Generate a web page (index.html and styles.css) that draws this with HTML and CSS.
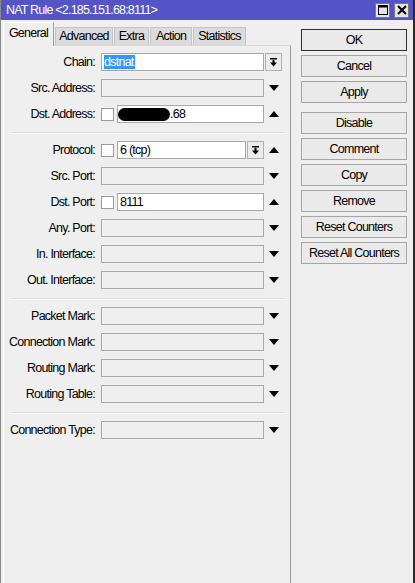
FILE: index.html
```html
<!DOCTYPE html>
<html lang="en">
<head>
<meta charset="UTF-8">
<meta name="viewport" content="width=device-width, initial-scale=1.0">
<title>NAT Rule</title>
<link rel="stylesheet" href="styles.css">
</head>
<body>

<div class="ventana">
  <div class="barra-titulo">
    <span class="titulo">NAT Rule &lt;2.185.151.68:8111&gt;</span>
    <div class="botones-titulo">
      <span class="btn-titulo">
        <svg width="10" height="10" viewBox="0 0 10 10"><rect x="0.5" y="0.5" width="9" height="9" fill="none" stroke="#000" stroke-width="1"/><line x1="0" y1="1.5" x2="10" y2="1.5" stroke="#000" stroke-width="2"/></svg>
      </span>
      <span class="btn-titulo">
        <svg width="10" height="10" viewBox="0 0 10 10"><path d="M1 1 L9 9 M9 1 L1 9" stroke="#000" stroke-width="2"/></svg>
      </span>
    </div>
  </div>

  <div class="contenido">
    <div class="columna">
      <div class="pestanas">
        <span class="pestana activa">General</span>
        <span class="pestana">Advanced</span>
        <span class="pestana">Extra</span>
        <span class="pestana">Action</span>
        <span class="pestana">Statistics</span>
      </div>

      <div class="panel">
        <div class="grupo">
          <div class="fila">
            <span class="etiqueta">Chain:</span>
            <div class="campo ancho">
              <span class="entrada blanca"><span class="seleccion">dstnat</span></span>
              <span class="desplegar"><svg width="9" height="9" viewBox="0 0 9 9"><rect x="1" y="0" width="7" height="1.5" fill="#000"/><rect x="3.5" y="2" width="2" height="3" fill="#000"/><polygon points="1,4.5 8,4.5 4.5,8.5" fill="#000"/></svg></span>
            </div>
          </div>
          <div class="fila">
            <span class="etiqueta">Src. Address:</span>
            <div class="campo"><span class="entrada"></span></div>
            <span class="flecha abajo"></span>
          </div>
          <div class="fila">
            <span class="etiqueta">Dst. Address:</span>
            <div class="campo">
              <span class="casilla"></span>
              <span class="entrada blanca"><span class="tachado"></span>.68</span>
            </div>
            <span class="flecha arriba"></span>
          </div>
        </div>
        <div class="separador"></div>

        <div class="grupo">
          <div class="fila">
            <span class="etiqueta">Protocol:</span>
            <div class="campo">
              <span class="casilla"></span>
              <span class="entrada blanca">6 (tcp)</span>
              <span class="desplegar"><svg width="9" height="9" viewBox="0 0 9 9"><rect x="1" y="0" width="7" height="1.5" fill="#000"/><rect x="3.5" y="2" width="2" height="3" fill="#000"/><polygon points="1,4.5 8,4.5 4.5,8.5" fill="#000"/></svg></span>
            </div>
            <span class="flecha arriba"></span>
          </div>
          <div class="fila">
            <span class="etiqueta">Src. Port:</span>
            <div class="campo"><span class="entrada"></span></div>
            <span class="flecha abajo"></span>
          </div>
          <div class="fila">
            <span class="etiqueta">Dst. Port:</span>
            <div class="campo">
              <span class="casilla"></span>
              <span class="entrada blanca">8111</span>
            </div>
            <span class="flecha arriba"></span>
          </div>
          <div class="fila">
            <span class="etiqueta">Any. Port:</span>
            <div class="campo"><span class="entrada"></span></div>
            <span class="flecha abajo"></span>
          </div>
          <div class="fila">
            <span class="etiqueta">In. Interface:</span>
            <div class="campo"><span class="entrada"></span></div>
            <span class="flecha abajo"></span>
          </div>
          <div class="fila">
            <span class="etiqueta">Out. Interface:</span>
            <div class="campo"><span class="entrada"></span></div>
            <span class="flecha abajo"></span>
          </div>
        </div>
        <div class="separador"></div>

        <div class="grupo">
          <div class="fila">
            <span class="etiqueta">Packet Mark:</span>
            <div class="campo"><span class="entrada"></span></div>
            <span class="flecha abajo"></span>
          </div>
          <div class="fila">
            <span class="etiqueta">Connection Mark:</span>
            <div class="campo"><span class="entrada"></span></div>
            <span class="flecha abajo"></span>
          </div>
          <div class="fila">
            <span class="etiqueta">Routing Mark:</span>
            <div class="campo"><span class="entrada"></span></div>
            <span class="flecha abajo"></span>
          </div>
          <div class="fila">
            <span class="etiqueta">Routing Table:</span>
            <div class="campo"><span class="entrada"></span></div>
            <span class="flecha abajo"></span>
          </div>
        </div>
        <div class="separador"></div>

        <div class="grupo">
          <div class="fila">
            <span class="etiqueta">Connection Type:</span>
            <div class="campo"><span class="entrada"></span></div>
            <span class="flecha abajo"></span>
          </div>
        </div>
      </div>
    </div>

    <div class="acciones">
      <span class="boton principal">OK</span>
      <span class="boton">Cancel</span>
      <span class="boton">Apply</span>
      <span class="boton separado">Disable</span>
      <span class="boton">Comment</span>
      <span class="boton">Copy</span>
      <span class="boton">Remove</span>
      <span class="boton">Reset Counters</span>
      <span class="boton">Reset All Counters</span>
    </div>
  </div>
</div>

</body>
</html>
```

FILE: styles.css
```css
body {
  margin: 0;
  padding: 0;
  background: #f0eff0;
  font-family: "Liberation Sans", Arial, sans-serif;
  font-size: 12.5px;
  letter-spacing: -0.75px;
  color: #000;
}

.ventana {
  width: 415px;
  height: 583px;
  box-sizing: border-box;
  border-left: 1px solid #8a8a8a;
  border-right: 2px solid #2a2a2a;
  display: flex;
  flex-direction: column;
  overflow: hidden;
}

.barra-titulo {
  height: 20px;
  background: #5454c6;
  display: flex;
  align-items: center;
  justify-content: space-between;
  padding: 0 4px 0 5px;
}

.titulo {
  color: #fff;
  font-size: 12.5px;
  letter-spacing: -0.8px;
}

.botones-titulo {
  display: flex;
  gap: 4px;
}

.btn-titulo {
  width: 13px;
  height: 13px;
  background: #e4e4e4;
  border: 1px solid #7a7a7a;
  display: flex;
  align-items: center;
  justify-content: center;
}

.contenido {
  flex: 1;
  display: flex;
  padding-top: 2px;
}

.columna {
  width: 288px;
  margin-left: 2px;
  display: flex;
  flex-direction: column;
}

/* pestañas */
.pestanas {
  display: flex;
  align-items: flex-end;
  height: 23px;
}

.pestana {
  height: 17px;
  line-height: 17px;
  padding: 0;
  text-align: center;
  background: #dcdbdc;
  border: 1px solid #c4c4c4;
  border-bottom: none;
  margin-left: 1px;
}

.pestana.activa {
  height: 23px;
  line-height: 21px;
  width: 49px;
  background: #f0eff0;
  border: 1px solid #fff;
  border-right-color: #a0a0a0;
  border-bottom: none;
  margin-left: 0;
  position: relative;
  z-index: 1;
  margin-bottom: -1px;
}

.pestana:nth-child(2) {
  width: 56px;
}

.pestana:nth-child(3) {
  width: 33px;
}

.pestana:nth-child(4) {
  width: 40px;
}

.pestana:nth-child(5) {
  width: 51px;
}

.panel {
  flex: 1;
  border-top: 1px solid #d8d8d8;
  border-left: 1px solid #fff;
  border-right: 1px solid #9a9a9a;
}

.grupo {
  padding: 7px 0 9px;
  display: flex;
  flex-direction: column;
  gap: 8px;
}

.separador {
  margin: 0 6px 0 8px;
  border-top: 1px solid #dcdcdc;
  border-bottom: 1px solid #fbfbfb;
}

.fila {
  display: flex;
  align-items: center;
  height: 18px;
}

.etiqueta {
  width: 91px;
  margin-right: 6px;
  text-align: right;
  white-space: nowrap;
}

.campo {
  width: 163px;
  height: 18px;
  display: flex;
  align-items: center;
}

.campo.ancho {
  width: 181px;
}

.entrada {
  flex: 1;
  height: 16px;
  line-height: 16px;
  border: 1px solid #a9a9a9;
  background: #f0eff0;
  padding-left: 2px;
  display: flex;
  align-items: center;
  white-space: nowrap;
}

.entrada.blanca {
  background: #fff;
}

.seleccion {
  background: #3399ff;
  color: #fff;
  line-height: 14px;
  padding-right: 1px;
}

.tachado {
  display: inline-block;
  width: 52px;
  height: 13px;
  background: #000;
  border-radius: 7px;
  margin-left: -2px;
}

.casilla {
  width: 11px;
  height: 11px;
  border: 1px solid #9a9a9a;
  background: #fff;
  margin-right: 3px;
  flex-shrink: 0;
}

.desplegar {
  width: 15px;
  height: 16px;
  margin-left: 1px;
  border: 1px solid #b0b0b0;
  background: #ebebeb;
  display: flex;
  align-items: center;
  justify-content: center;
  flex-shrink: 0;
}

.flecha {
  width: 20px;
  display: flex;
  justify-content: center;
}

.flecha::before {
  content: "";
  border-left: 5px solid transparent;
  border-right: 5px solid transparent;
}

.flecha.abajo::before {
  border-top: 6px solid #000;
}

.flecha.arriba::before {
  border-bottom: 6px solid #000;
}

/* botones de la derecha */
.acciones {
  width: 106px;
  margin-left: 10px;
  padding-top: 7px;
  display: flex;
  flex-direction: column;
  gap: 4px;
}

.boton {
  height: 20px;
  line-height: 20px;
  text-align: center;
  background: #ebeaeb;
  border: 1px solid #a6a6a6;
  white-space: nowrap;
}

.boton.principal {
  border-color: #2e2e2e;
}

.boton.separado {
  margin-top: 5px;
}
```
